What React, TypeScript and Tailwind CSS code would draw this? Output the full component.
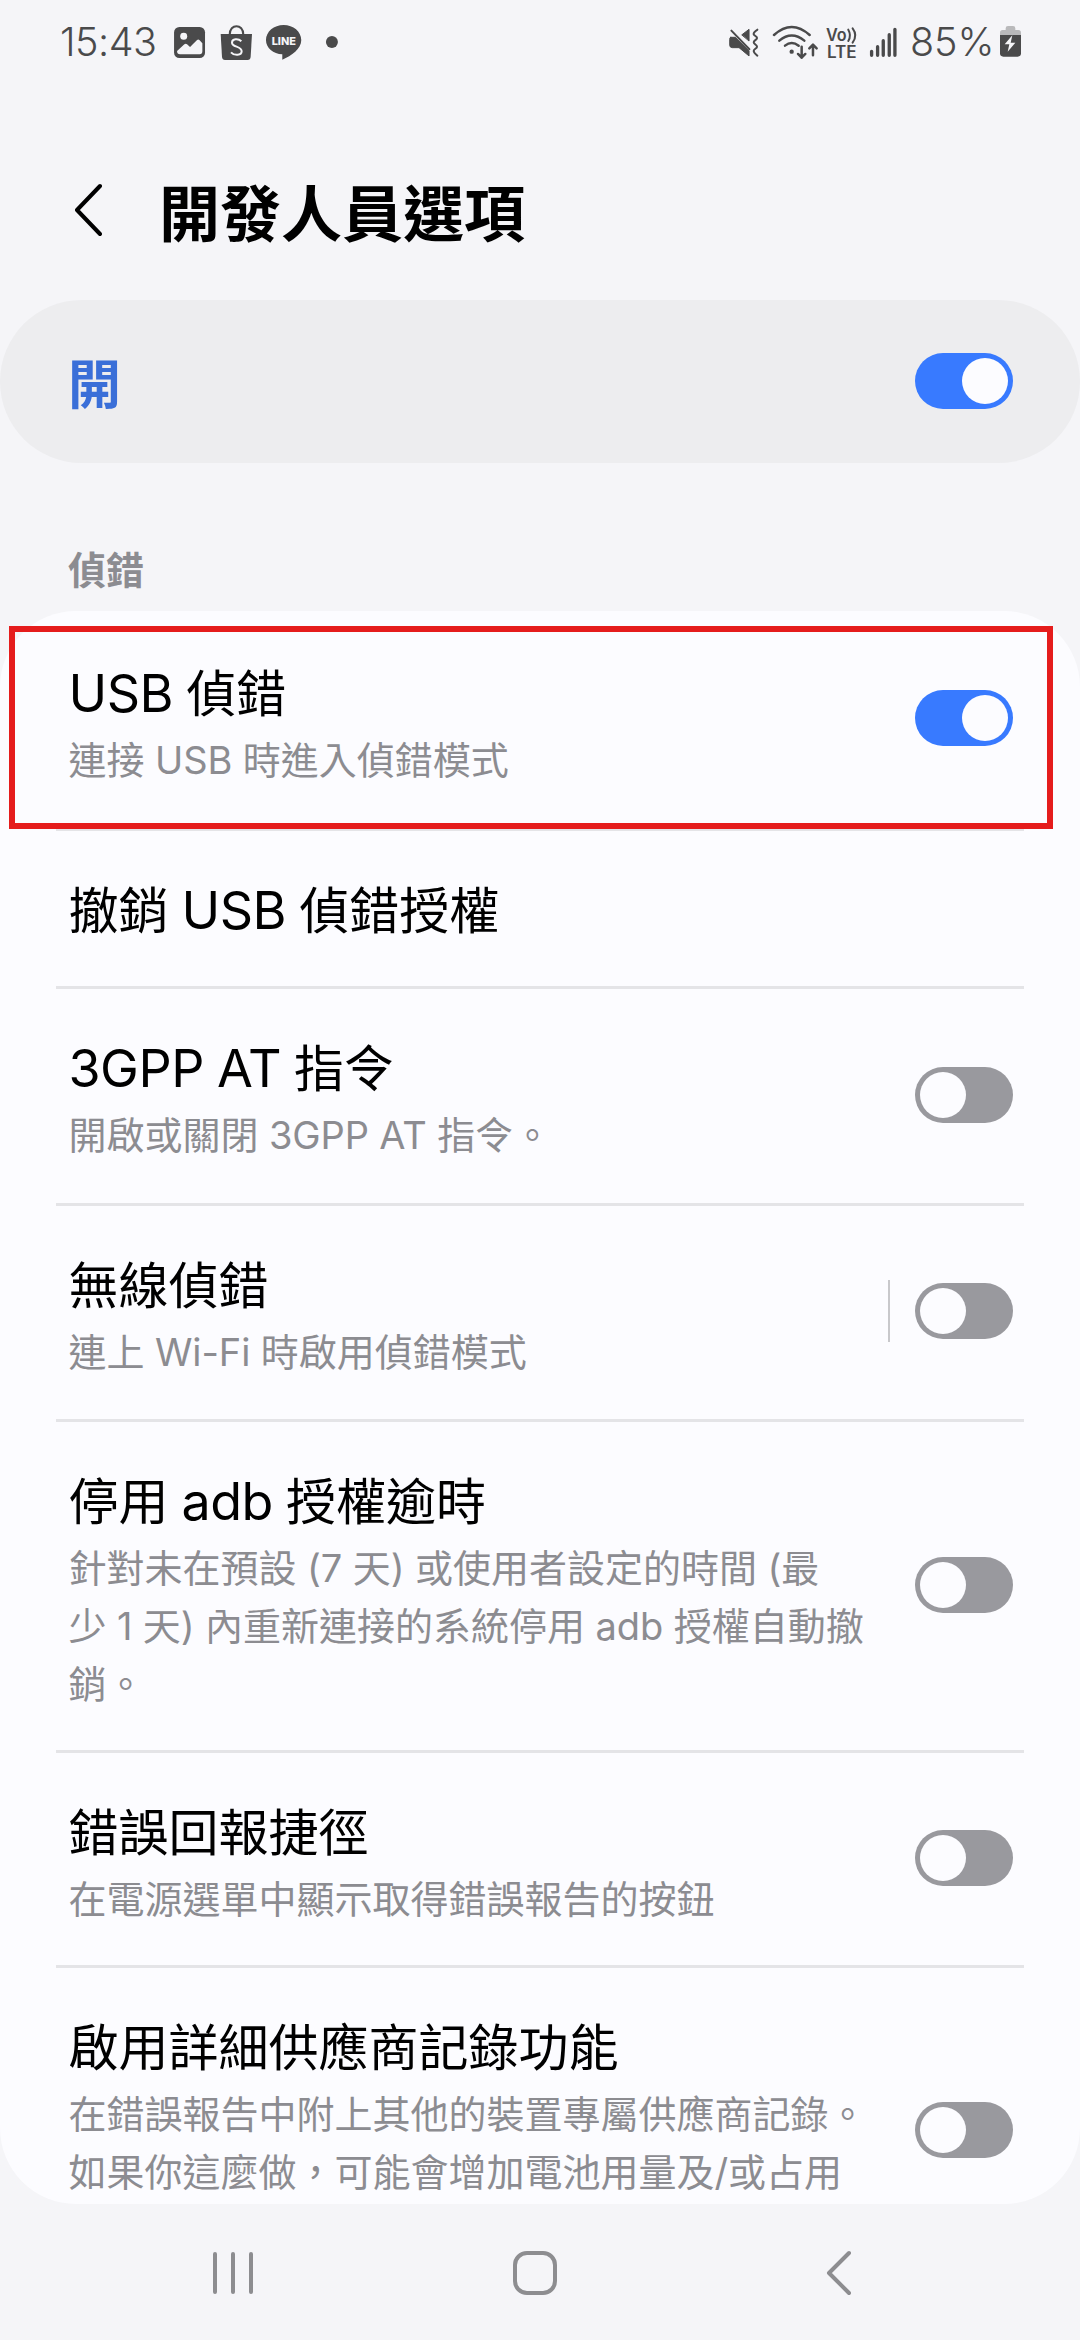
import React from "react";

const GRAY = "#4a4a4b";
const PAPER = "#f5f5f8";

function Mixed({ text, latin }: { text: string; latin: string }) {
  return (
    <>
      {text.split(/([A-Za-z0-9()\-/]+(?: [A-Za-z0-9()\-/]+)*)/).map((part, i) =>
        i % 2 ? (
          <span key={i} className={latin}>
            {part}
          </span>
        ) : (
          part
        ),
      )}
    </>
  );
}

function Toggle({ on }: { on?: boolean }) {
  return (
    <div
      className={`flex h-14 w-[98px] shrink-0 items-center rounded-full px-[5px] ${
        on ? "justify-end bg-[#387aff]" : "justify-start bg-[#99999e]"
      }`}
    >
      <div className="size-[46px] rounded-full bg-[#fcfcff]" />
    </div>
  );
}

type RowProps = {
  title: string;
  lines?: string[];
  height: string;
  pad: string;
  toggle?: "on" | "off";
  split?: boolean;
  highlight?: boolean;
  last?: boolean;
};

function Row({ title, lines = [], height, pad, toggle, split, highlight, last }: RowProps) {
  return (
    <div className={`relative flex shrink-0 items-center justify-between pr-[67px] pb-[6px] pl-[68.500px] ${height}`}>
      <div className={`self-start whitespace-nowrap ${pad}`}>
        <div className="mb-[5px] text-[50px] leading-[64px] text-black [word-spacing:-1px]">
          <Mixed text={title} latin="text-[52px] leading-none tracking-[-0.5px]" />
        </div>
        {lines.map((l) => (
          <div key={l} className="text-[38px] leading-[58px] text-[#8c8c91] [word-spacing:-0.2px]">
            <Mixed text={l} latin="text-[38px] leading-none tracking-[-0.1px]" />
          </div>
        ))}
      </div>
      <div className="flex items-center gap-[25px]">
        {split && <div className="h-[62px] w-0.5 bg-[#c8c8cb]" />}
        {toggle && <Toggle on={toggle === "on"} />}
      </div>
      {!last && <div className="absolute right-14 bottom-0 left-14 h-[3px] bg-[#e4e4e7]" />}
      {highlight && (
        <div className="absolute top-[15px] left-[9px] h-[203px] w-[1044px] border-[6.500px] border-[#e51c1c]" />
      )}
    </div>
  );
}

function NotificationIcons() {
  return (
    <svg width="173.300" height="43.300" viewBox="390 30 520 130" fill={GRAY}>
      {/* gallery */}
      <rect x="402" y="51" width="93" height="93" rx="16" />
      <circle cx="431" cy="79" r="10.500" fill={PAPER} />
      <path d="M411 123l22-20q4-3 8 0l9 8 21-21q4-3 7 0l9 10v24q0 9-8 9h-59q-9 0-9-10z" fill={PAPER} />
      {/* shopping bag */}
      <path d="M542 72h94l-4 69q-1 9-9 9h-68q-8 0-9-9z" />
      <path d="M569 74c0-34 41-34 41 0" fill="none" stroke={GRAY} strokeWidth="6" />
      <path
        d="M604 94c-9-9-28-8-28 4 0 14 29 10 29 26 0 13-22 14-32 3"
        fill="none"
        stroke={PAPER}
        strokeWidth="6"
      />
      {/* chat bubble */}
      <path d="M731 45c29 0 53 20 53 45 0 27-29 47-57 59v-16c-27-1-49-19-49-43 0-25 24-45 53-45z" />
      <text x="695" y="104" fontSize="31" fontWeight="800" fontFamily="Inter" textLength="73" lengthAdjust="spacingAndGlyphs" fill={PAPER}>
        LINE
      </text>
      <circle cx="876" cy="96" r="18" />
    </svg>
  );
}

function SystemIcons() {
  return (
    <svg width="173.300" height="43.300" viewBox="54 30 520 130" fill="none" stroke={GRAY} strokeLinecap="round" strokeLinejoin="round">
      {/* muted speaker with vibration */}
      <path d="M96 74L117 58V92z" fill={GRAY} strokeWidth="3" />
      <path d="M62 82h14l41 41v15L87 113H67q-8 0-8-8v-17q0-6 3-6z" fill={GRAY} strokeWidth="3" />
      <path d="M64 62l54 56" strokeWidth="6" />
      <path d="M142 59c-7 6-13 9-11 14s10 6 10 11-10 8-10 13 10 8 10 13-10 8-10 13 4 8 11 14" strokeWidth="6" />
      {/* wifi with transfer arrows */}
      <path d="M192 75q53-48 107 0" strokeWidth="7.500" />
      <path d="M208 92q37-31 75 0" strokeWidth="7.500" />
      <path d="M225 107q20-16 41 0" strokeWidth="7.500" />
      <circle cx="245" cy="125" r="6.500" fill={GRAY} stroke="none" />
      <path d="M275 110v33M264 132l11 11 11-11" strokeWidth="7.500" />
      <path d="M309 136v-32M298 115l11-11 11 11" strokeWidth="7.500" />
      {/* VoLTE */}
      <g fill={GRAY} stroke="none" fontFamily="Inter" fontWeight="600">
        <text x="348" y="94" fontSize="50" textLength="62" lengthAdjust="spacingAndGlyphs">Vo</text>
        <text x="351" y="143" fontSize="50" textLength="89" lengthAdjust="spacingAndGlyphs">LTE</text>
      </g>
      <path d="M415 59q10 17 0 34M428 55q16 21 0 43" strokeWidth="6" />
      {/* signal bars */}
      <path d="M485 124v12M503 110v26M520 92v44M538 74v62M555 58v78" strokeWidth="10" />
    </svg>
  );
}

function Battery() {
  return (
    <svg width="21" height="31" viewBox="870 50 63 93">
      <path d="M870 78v-8q0-8 8-8h9v-5q0-7 7-7h15q7 0 7 7v5h9q8 0 8 8v8z" fill="#b9b9bb" />
      <path d="M870 77h63v55q0 10-10 10h-43q-10 0-10-10z" fill={GRAY} />
      <path d="M907 78l-23 27h14l-5 22 23-27h-14z" fill={PAPER} />
    </svg>
  );
}

function StatusBar() {
  return (
    <div className="flex h-[83px] shrink-0 items-center justify-between pr-[59px] pl-[60px] text-[#4a4a4b]">
      <div className="flex items-center">
        <span className="w-[110px] pt-0.5 text-[39.500px] font-[340] tracking-[-0.5px]">15:43</span>
        <NotificationIcons />
      </div>
      <div className="flex items-center">
        <SystemIcons />
        <span className="ml-[9px] w-[90px] pt-0.5 text-[39.500px] font-[340] tracking-[-0.1px] whitespace-nowrap">85%</span>
        <Battery />
      </div>
    </div>
  );
}

function NavBar() {
  return (
    <nav className="flex h-[138px] shrink-0 items-center pl-[213px]">
      <svg width="40" height="46" viewBox="0 0 40 46" stroke="#8d8d90" strokeWidth="4" strokeLinecap="round">
        <path d="M2 4v38M20 4v38M38 4v38" />
      </svg>
      <svg className="ml-[260px]" width="44" height="46" viewBox="0 0 44 46" fill="none" stroke="#8d8d90" strokeWidth="4">
        <rect x="2" y="3" width="40" height="40" rx="12" />
      </svg>
      <svg className="ml-[269px]" width="26" height="46" viewBox="0 0 26 46" fill="none" stroke="#8d8d90" strokeWidth="4" strokeLinecap="round" strokeLinejoin="round">
        <path d="M23 3L3 23L23 43" />
      </svg>
    </nav>
  );
}

export default function App() {
  return (
    <div className="flex h-[2340px] w-[1080px] flex-col overflow-hidden bg-[#f5f5f8] font-['Inter','Noto_Sans_CJK_TC',sans-serif]">
      <StatusBar />
      <header className="flex h-[217px] shrink-0 items-center pt-[37px] pl-[74px]">
        <svg width="28" height="54" viewBox="0 0 28 54" fill="none" stroke="#000" strokeWidth="4" strokeLinecap="round" strokeLinejoin="round">
          <path d="M26 3L3 27L26 51" />
        </svg>
        <h1 className="mt-2.5 ml-[57px] text-[61px] leading-[80px] font-semibold">開發人員選項</h1>
      </header>
      <div className="flex h-[163px] shrink-0 items-center justify-between rounded-full bg-[#ededef] pr-[67px] pb-px pl-[68px]">
        <span className="pt-2 text-[53px] leading-[70px] font-semibold text-[#3a6fd8]">開</span>
        <Toggle on />
      </div>
      <div className="h-[148px] shrink-0 pt-[79px] pl-[68px] text-[38px] font-semibold text-[#8c8c91]">偵錯</div>
      <main className="flex h-[1593px] shrink-0 flex-col rounded-[76px] bg-[#fcfcff]">
        <Row title="USB 偵錯" lines={["連接 USB 時進入偵錯模式"]} height="h-[220px]" pad="pt-[51px]" toggle="on" highlight />
        <Row title="撤銷 USB 偵錯授權" height="h-[158px]" pad="pt-[48px]" />
        <Row title="3GPP AT 指令" lines={["開啟或關閉 3GPP AT 指令。"]} height="h-[217px]" pad="pt-[48px]" toggle="off" />
        <Row title="無線偵錯" lines={["連上 Wi-Fi 時啟用偵錯模式"]} height="h-[216px]" pad="pt-[48px]" toggle="off" split />
        <Row
          title="停用 adb 授權逾時"
          lines={["針對未在預設 (7 天) 或使用者設定的時間 (最", "少 1 天) 內重新連接的系統停用 adb 授權自動撤", "銷。"]}
          height="h-[331px]"
          pad="pt-[48px]"
          toggle="off"
        />
        <Row title="錯誤回報捷徑" lines={["在電源選單中顯示取得錯誤報告的按鈕"]} height="h-[215px]" pad="pt-[48px]" toggle="off" />
        <Row
          title="啟用詳細供應商記錄功能"
          lines={["在錯誤報告中附上其他的裝置專屬供應商記錄。", "如果你這麼做，可能會增加電池用量及/或占用"]}
          height="h-[330px]"
          pad="pt-[48px]"
          toggle="off"
          last
        />
      </main>
      <NavBar />
    </div>
  );
}
